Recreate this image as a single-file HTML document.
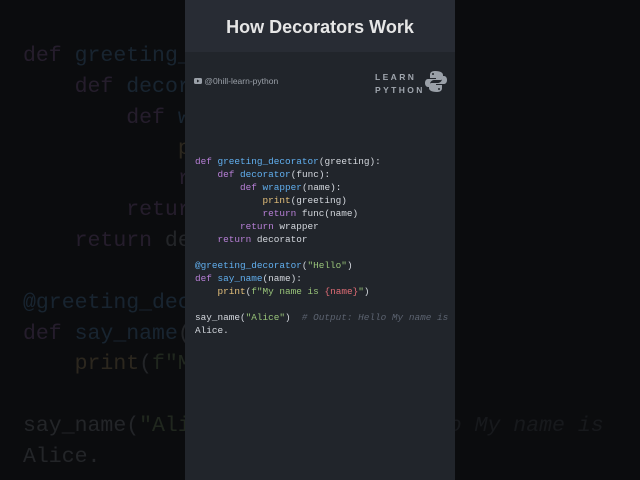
<!DOCTYPE html>
<html><head><meta charset="utf-8"><style>
*{margin:0;padding:0;box-sizing:border-box}
body{width:640px;height:480px;overflow:hidden;background:#0b0c0e;position:relative;font-family:"Liberation Sans",sans-serif}
pre{font-family:"Liberation Mono",monospace;white-space:pre}
.bg{position:absolute;left:23px;top:41px;font-size:21.5px;line-height:30.85px;opacity:.15;color:#abb2bf}
.panel{position:absolute;left:185px;top:0;width:270px;height:480px;background:#21252b}
.hdr{height:52px;background:#282c34;color:#e6e6e6;font-weight:bold;font-size:18px;text-align:center;line-height:54px}
.code{position:absolute;left:10px;top:155px;font-size:9.4px;line-height:13px;color:#d4d8de}
.k{color:#b77fd6}.f{color:#61afef}.p{color:#e5c07b}.s{color:#98c379}.c{color:#5c6370;font-style:italic}.r{color:#e06c75}
.yt{position:absolute;left:9px;top:76px;font-size:8.5px;color:#9aa0a8}
.logo{position:absolute;left:190px;top:71px;font-weight:bold;font-size:8.5px;letter-spacing:2.4px;color:#a0a6ae;line-height:13px}
</style></head><body>
<pre class="bg"><span class="k">def</span> <span class="f">greeting_decorator</span>(greeting):
    <span class="k">def</span> <span class="f">decorator</span>(func):
        <span class="k">def</span> <span class="f">wrapper</span>(name):
            <span class="p">print</span>(greeting)
            <span class="k">return</span> func(name)
        <span class="k">return</span> wrapper
    <span class="k">return</span> decorator

<span class="f">@greeting_decorator</span>(<span class="s">"Hello"</span>)
<span class="k">def</span> <span class="f">say_name</span>(name):
    <span class="p">print</span>(<span class="s">f"My name is </span><span class="r">{name}</span><span class="s">"</span>)

say_name(<span class="s">"Alice"</span>)  <span class="c"># Output: Hello My name is</span>
Alice.</pre>
<div class="panel">
<div class="hdr">How Decorators Work</div>
<div class="yt"><svg width="8" height="6" style="vertical-align:0px"><rect width="8" height="6" rx="1.5" fill="#9aa0a8"/><path d="M3 1.5L5.5 3 3 4.5z" fill="#21252b"/></svg> @0hill-learn-python</div>
<div class="logo">LEARN<br>PYTHON</div>
<svg style="position:absolute;left:240px;top:70px" width="22" height="23" viewBox="0 0 22 23"><path d="M10 1C6 1 5 3 5 5v3h6v1H3C1 9 0 11 0 13s1 4 3 4h2v-3c0-2 2-4 4-4h6c2 0 3-1 3-3V5c0-2-2-4-8-4z" fill="#9aa0a8"/><path d="M12 22c4 0 5-2 5-4v-3h-6v-1h8c2 0 3-2 3-4s-1-4-3-4h-2v3c0 2-2 4-4 4H7c-2 0-3 1-3 3v2c0 2 2 4 8 4z" fill="#9aa0a8"/><circle cx="8" cy="4" r="1" fill="#21252b"/><circle cx="14" cy="19" r="1" fill="#21252b"/></svg>
<pre class="code"><span class="k">def</span> <span class="f">greeting_decorator</span>(greeting):
    <span class="k">def</span> <span class="f">decorator</span>(func):
        <span class="k">def</span> <span class="f">wrapper</span>(name):
            <span class="p">print</span>(greeting)
            <span class="k">return</span> func(name)
        <span class="k">return</span> wrapper
    <span class="k">return</span> decorator

<span class="f">@greeting_decorator</span>(<span class="s">"Hello"</span>)
<span class="k">def</span> <span class="f">say_name</span>(name):
    <span class="p">print</span>(<span class="s">f"My name is </span><span class="r">{name}</span><span class="s">"</span>)

say_name(<span class="s">"Alice"</span>)  <span class="c"># Output: Hello My name is</span>
Alice.</pre>
</div>
</body></html>
